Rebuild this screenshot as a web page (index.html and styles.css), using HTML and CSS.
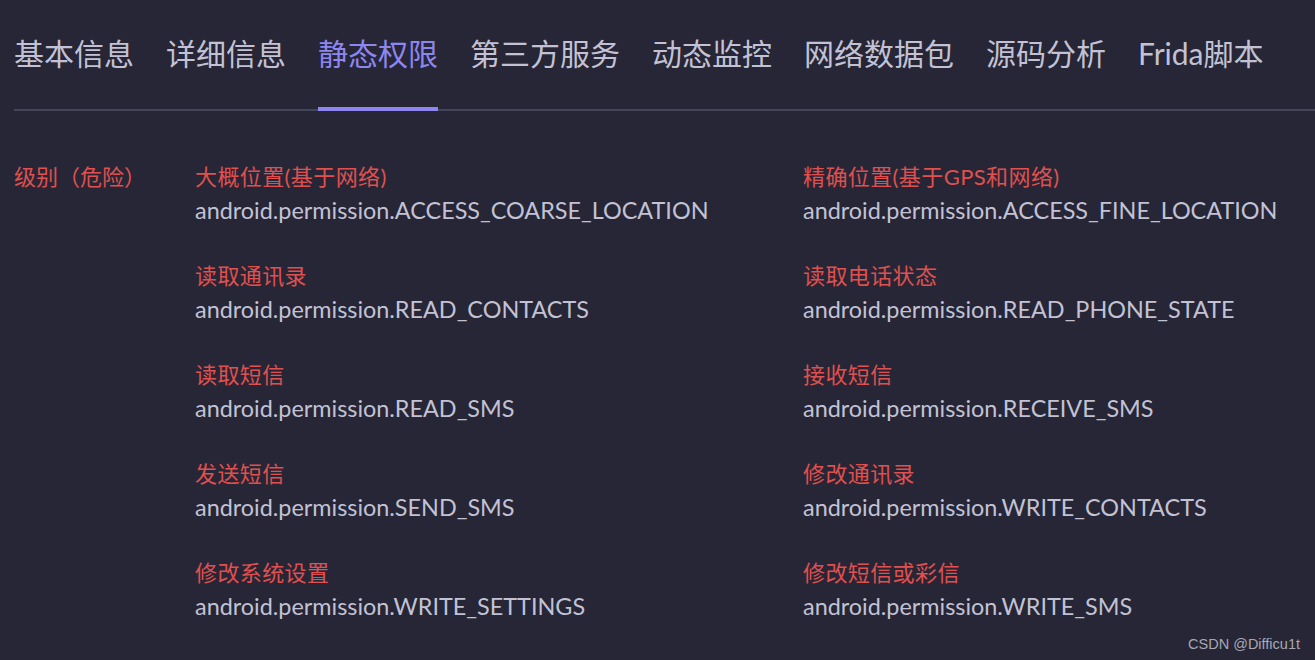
FILE: index.html
```html
<!DOCTYPE html>
<html lang="zh">
<head>
<meta charset="utf-8">
<link rel="stylesheet" href="styles.css">
</head>
<body>
<div class="page">
  <nav class="tabs">
    <div class="tab">基本信息</div>
    <div class="tab">详细信息</div>
    <div class="tab active">静态权限</div>
    <div class="tab">第三方服务</div>
    <div class="tab">动态监控</div>
    <div class="tab">网络数据包</div>
    <div class="tab">源码分析</div>
    <div class="tab">Frida脚本</div>
  </nav>
  <section class="section">
    <div class="level">级别（危险）</div>
    <div class="perms">
      <div class="perm"><div class="name">大概位置(基于网络)</div><div class="id">android.permission.ACCESS_COARSE_LOCATION</div></div>
      <div class="perm"><div class="name">精确位置(基于GPS和网络)</div><div class="id">android.permission.ACCESS_FINE_LOCATION</div></div>
      <div class="perm"><div class="name">读取通讯录</div><div class="id">android.permission.READ_CONTACTS</div></div>
      <div class="perm"><div class="name">读取电话状态</div><div class="id">android.permission.READ_PHONE_STATE</div></div>
      <div class="perm"><div class="name">读取短信</div><div class="id">android.permission.READ_SMS</div></div>
      <div class="perm"><div class="name">接收短信</div><div class="id">android.permission.RECEIVE_SMS</div></div>
      <div class="perm"><div class="name">发送短信</div><div class="id">android.permission.SEND_SMS</div></div>
      <div class="perm"><div class="name">修改通讯录</div><div class="id">android.permission.WRITE_CONTACTS</div></div>
      <div class="perm"><div class="name">修改系统设置</div><div class="id">android.permission.WRITE_SETTINGS</div></div>
      <div class="perm"><div class="name">修改短信或彩信</div><div class="id">android.permission.WRITE_SMS</div></div>
    </div>
  </section>
</div>
<div class="watermark">CSDN @Difficu1t</div>
</body>
</html>
```
FILE: styles.css
```css
html, body {
  margin: 0;
  height: 100%;
}
body {
  background: #262636;
  font-family: Lato, "Noto Sans CJK SC", sans-serif;
  overflow: hidden;
}
.page {
  padding-left: 14px;
}
.tabs {
  display: flex;
  gap: 32px;
  border-bottom: 2px solid #45455a;
}
.tab {
  font-size: 30px;
  line-height: 40px;
  padding: 33px 0 34px;
  margin-bottom: -2px;
  color: #c2c2d4;
  border-bottom: 4px solid transparent;
  white-space: nowrap;
}
.tab.active {
  color: #8e86f0;
  border-bottom-color: #8e86f0;
}
.section {
  display: flex;
  margin-top: 49px;
}
.level {
  width: 181px;
  flex: none;
  color: #e0504e;
  font-size: 22px;
  line-height: 33px;
}
.perms {
  display: grid;
  grid-template-columns: 608px 1fr;
  row-gap: 31px;
}
.name {
  color: #e0504e;
  font-size: 22px;
  line-height: 33px;
  letter-spacing: 0.4px;
}
.id {
  color: #c2c2d4;
  font-size: 23.4px;
  line-height: 35px;
}
.watermark {
  position: absolute;
  right: 15px;
  bottom: 8px;
  font-family: "Liberation Sans", sans-serif;
  font-size: 14.5px;
  color: #a8a8b4;
}
```
